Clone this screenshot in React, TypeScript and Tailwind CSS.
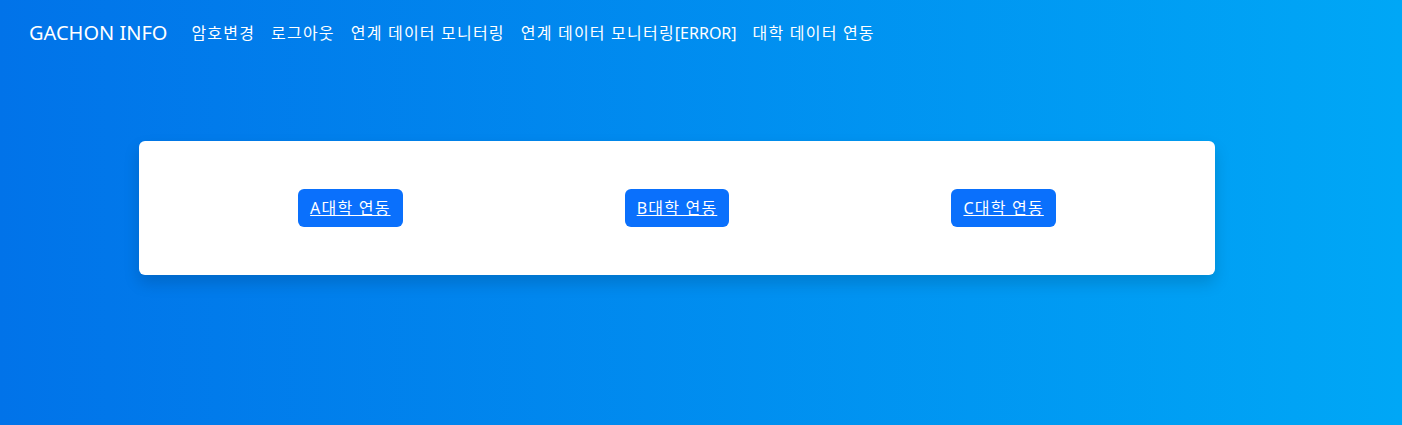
import React from "react";

const font = { fontFamily: '"Noto Sans", "Noto Sans CJK KR", sans-serif' };

export default function App() {
  const unis = ["A대학 연동", "B대학 연동", "C대학 연동"];
  const li = "px-[8px] text-[16px] leading-[24px] tracking-[1.2px] whitespace-nowrap";
  return (
    <div
      className="w-[1402px] h-[425px] bg-[linear-gradient(to_right,#0173e9,#00a7f6)] text-white"
      style={font}
    >
      <nav className="flex items-center h-[66px] pl-[29px]">
        <span className="text-[20px] leading-[30px] mr-[16px] whitespace-nowrap">GACHON INFO</span>
        <ul className="flex items-center">
          <li className={li}>암호변경</li>
          <li className={li}>로그아웃</li>
          <li className={li}>연계 데이터 모니터링</li>
          <li className={li}>
            연계 데이터 모니터링<span className="tracking-normal">[ERROR]</span>
          </li>
          <li className={li}>대학 데이터 연동</li>
        </ul>
      </nav>
      <div className="pl-[139px] pt-[75px]">
        <div className="w-[1076px] bg-white rounded-[6px] shadow-[0_8px_16px_rgba(0,0,0,0.15)] p-[48px] grid grid-cols-3">
          {unis.map((u) => (
            <div key={u} className="flex justify-center">
              <a className="bg-[#0a70fc] text-white underline text-[16px] leading-[24px] tracking-[1.2px] px-[12px] py-[7px] rounded-[6px] whitespace-nowrap cursor-pointer">
                {u}
              </a>
            </div>
          ))}
        </div>
      </div>
    </div>
  );
}
